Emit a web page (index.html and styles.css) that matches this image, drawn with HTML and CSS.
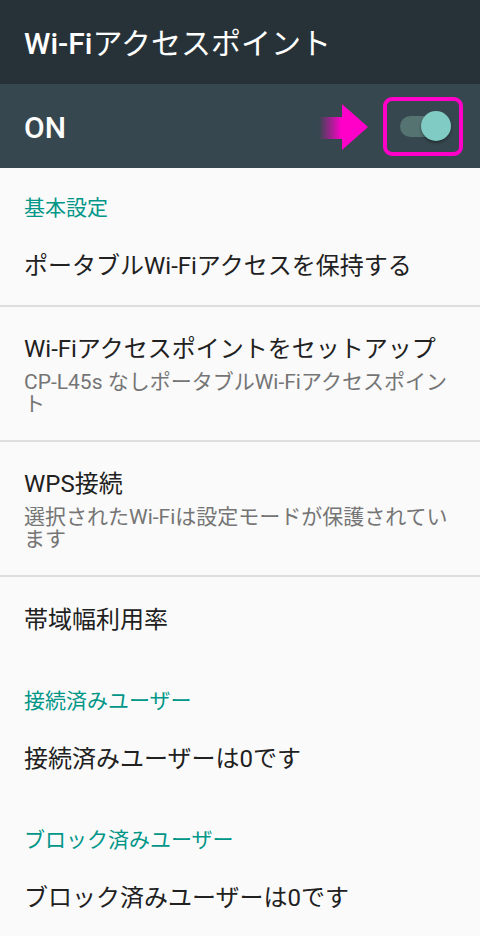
FILE: index.html
```html
<!DOCTYPE html>
<html lang="ja">
<head>
<meta charset="utf-8">
<title>Wi-Fiアクセスポイント</title>
<link rel="stylesheet" href="styles.css">
</head>
<body>
<div class="screen">
  <header class="appbar">
    <h1 class="appbar-title"><span class="latin">Wi-Fi</span>アクセスポイント</h1>
  </header>
  <div class="switchbar">
    <span class="switchbar-label">ON</span>
    <div class="switch">
      <span class="switch-track"></span>
      <span class="switch-thumb"></span>
    </div>
    <svg class="annot-arrow" width="52" height="48" viewBox="0 0 52 48">
      <defs>
        <linearGradient id="tailg" x1="0" y1="0" x2="1" y2="0">
          <stop offset="0" stop-color="#ff00c8" stop-opacity="0"/>
          <stop offset="0.9" stop-color="#ff00c8" stop-opacity="1"/>
        </linearGradient>
      </defs>
      <rect x="1" y="13" width="25" height="22" fill="url(#tailg)"/>
      <polygon points="24,0 50,23 24,46" fill="#ff00c8"/>
    </svg>
    <span class="annot-box"></span>
  </div>

  <main class="prefs">
    <div class="pref-category">基本設定</div>
    <div class="pref pref-divided">
      <div class="pref-title">ポータブルWi-Fiアクセスを保持する</div>
    </div>
    <div class="pref pref-two pref-divided">
      <div class="pref-title">Wi-Fiアクセスポイントをセットアップ</div>
      <div class="pref-summary">CP-L45s なしポータブルWi-Fiアクセスポイント</div>
    </div>
    <div class="pref pref-two pref-divided">
      <div class="pref-title">WPS接続</div>
      <div class="pref-summary">選択されたWi-Fiは設定モードが保護されています</div>
    </div>
    <div class="pref">
      <div class="pref-title">帯域幅利用率</div>
    </div>

    <div class="pref-category">接続済みユーザー</div>
    <div class="pref">
      <div class="pref-title">接続済みユーザーは0です</div>
    </div>

    <div class="pref-category">ブロック済みユーザー</div>
    <div class="pref">
      <div class="pref-title">ブロック済みユーザーは0です</div>
    </div>
  </main>
</div>
</body>
</html>
```

FILE: styles.css
```css
html, body {
  margin: 0;
  padding: 0;
}
body {
  background: #fafafa;
  font-family: Roboto, "Noto Sans CJK JP", "Noto Sans", sans-serif;
  color: #212121;
}
.screen {
  width: 480px;
  height: 936px;
  overflow: hidden;
  background: #fafafa;
}

/* App bar */
.appbar {
  height: 84px;
  background: #263238;
  display: flex;
  align-items: center;
  padding: 0 24px;
  box-sizing: border-box;
}
.appbar-title {
  margin: 4px 0 0;
  font-size: 30px;
  font-weight: 400;
  color: #ffffff;
  line-height: 36px;
}
.appbar-title .latin {
  font-weight: 500;
}

/* Switch bar */
.switchbar {
  position: relative;
  height: 84px;
  background: #37474f;
  display: flex;
  align-items: center;
  justify-content: space-between;
  padding: 0 29px 0 24px;
  box-sizing: border-box;
}
.switchbar-label {
  font-size: 30px;
  font-weight: 500;
  color: #ffffff;
  line-height: 36px;
  margin-top: 4px;
}
.switch {
  position: relative;
  width: 51px;
  height: 30px;
}
.switch-track {
  position: absolute;
  left: 0;
  top: 5px;
  width: 48px;
  height: 21px;
  border-radius: 11px;
  background: #557371;
}
.switch-thumb {
  position: absolute;
  right: 0;
  top: 0;
  width: 30px;
  height: 30px;
  border-radius: 50%;
  background: #80cbc4;
  box-shadow: 0 2px 3px rgba(0, 0, 0, 0.35);
}
.annot-arrow {
  position: absolute;
  left: 318px;
  top: 20px;
}
.annot-box {
  position: absolute;
  left: 383px;
  top: 13px;
  width: 80px;
  height: 59px;
  box-sizing: border-box;
  border: 4px solid #ff00c8;
  border-radius: 9px;
}

/* Preferences */
.prefs {
  display: flex;
  flex-direction: column;
}
.pref-category {
  height: 55px;
  box-sizing: border-box;
  padding: 28px 24px 0;
  font-size: 21px;
  line-height: 24px;
  color: #009688;
}
.pref {
  padding: 27px 24px 25px;
}
.pref-divided {
  padding-bottom: 23px;
  border-bottom: 2px solid #dedede;
}
.pref-two {
  padding-top: 26px;
  padding-bottom: 25px;
}
.pref-title {
  font-size: 24px;
  line-height: 32px;
  color: #212121;
}
.pref-summary {
  margin-top: 6px;
  font-size: 21px;
  line-height: 22px;
  color: #757575;
}
```
